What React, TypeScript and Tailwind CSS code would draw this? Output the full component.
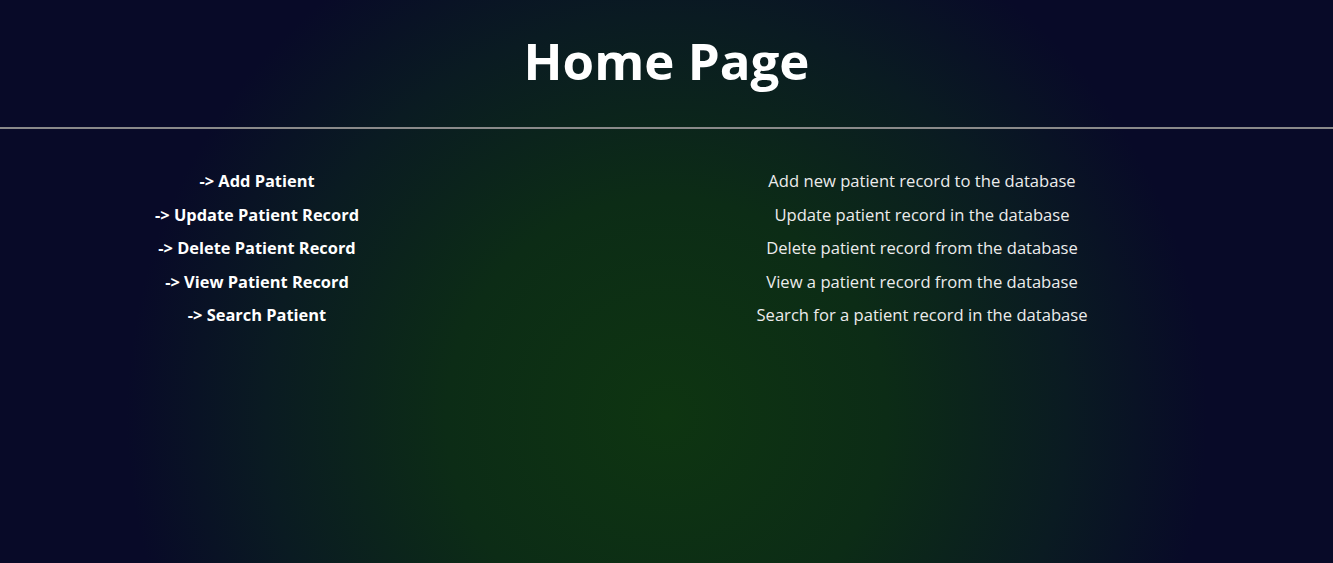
const rows = [
  { label: "-> Add Patient", desc: "Add new patient record to the database" },
  { label: "-> Update Patient Record", desc: "Update patient record in the database" },
  { label: "-> Delete Patient Record", desc: "Delete patient record from the database" },
  { label: "-> View Patient Record", desc: "View a patient record from the database" },
  { label: "-> Search Patient", desc: "Search for a patient record in the database" },
];

export default function App() {
  return (
    <div className="min-h-screen w-full bg-[radial-gradient(circle_at_50%_74%,#0e3511_0px,#0c2c16_220px,#0a1b22_400px,#080a28_540px)] font-['Open_Sans',sans-serif] text-white">
      <header className="flex h-[127px] items-center justify-center pb-[6px]">
        <h1 className="text-[51px] font-bold leading-none">Home Page</h1>
      </header>
      <div className="h-[2px] bg-[#8a8a8a]" />
      <div className="mt-[35px] grid grid-cols-[514px_1fr] pr-[3px]">
        {rows.map((r) => (
          <div key={r.label} className="contents">
            <div className="text-center text-[16.4px] font-bold leading-[33.5px]">{r.label}</div>
            <div className="text-center text-[16.6px] leading-[33.5px] text-[#ececec]">{r.desc}</div>
          </div>
        ))}
      </div>
    </div>
  );
}
